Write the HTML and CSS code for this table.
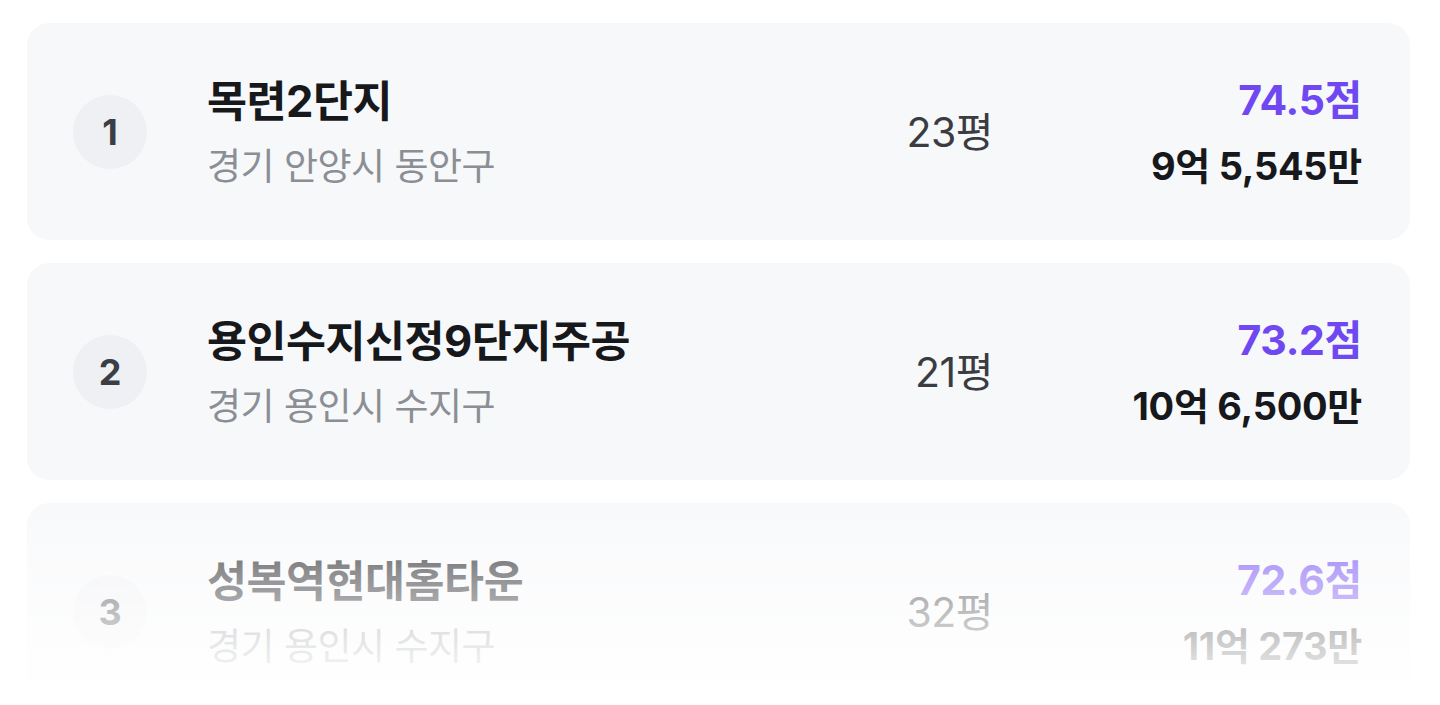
FILE: index.html
```html
<!DOCTYPE html>
<html lang="ko">
<head>
<meta charset="utf-8">
<link rel="stylesheet" href="styles.css">
</head>
<body>
<div class="list">
  <div class="card">
    <div class="rank">1</div>
    <div class="info">
      <div class="name">목련2단지</div>
      <div class="addr">경기 안양시 동안구</div>
    </div>
    <div class="area">23평</div>
    <div class="right">
      <div class="score">74.5점</div>
      <div class="price">9억 5,545만</div>
    </div>
  </div>
  <div class="card">
    <div class="rank">2</div>
    <div class="info">
      <div class="name">용인수지신정9단지주공</div>
      <div class="addr">경기 용인시 수지구</div>
    </div>
    <div class="area">21평</div>
    <div class="right">
      <div class="score">73.2점</div>
      <div class="price">10억 6,500만</div>
    </div>
  </div>
  <div class="card">
    <div class="rank">3</div>
    <div class="info">
      <div class="name">성복역현대홈타운</div>
      <div class="addr">경기 용인시 수지구</div>
    </div>
    <div class="area">32평</div>
    <div class="right">
      <div class="score">72.6점</div>
      <div class="price">11억 273만</div>
    </div>
  </div>
  <div class="fade"></div>
</div>
</body>
</html>
```

FILE: styles.css
```css
* { box-sizing: border-box; }
html, body {
  margin: 0;
  padding: 0;
  background: #ffffff;
  height: 705px;
  overflow: hidden;
}
body {
  font-family: Inter, "Noto Sans CJK KR", sans-serif;
}
.list {
  position: relative;
  height: 680px;
  overflow: hidden;
  padding: 23px 30px 0 27px;
  display: flex;
  flex-direction: column;
  gap: 23px;
}
.card {
  flex: 0 0 217px;
  background: #f7f8fa;
  border-radius: 22px;
  display: flex;
  align-items: center;
  padding: 0 48px 0 46px;
}
.rank {
  width: 74px;
  height: 74px;
  border-radius: 50%;
  background: #eff0f3;
  color: #3b3e45;
  font-weight: 700;
  font-size: 36px;
  display: flex;
  align-items: center;
  justify-content: center;
  flex: 0 0 74px;
}
.info {
  flex: 1;
  margin-left: 60px;
  display: flex;
  flex-direction: column;
  gap: 18px;
}
.name {
  font-size: 43.5px;
  font-weight: 700;
  color: #17181c;
  line-height: 52px;
  letter-spacing: -0.5px;
}
.addr {
  font-size: 37px;
  color: #8b8e94;
  line-height: 44px;
  letter-spacing: -0.5px;
}
.area {
  font-size: 41px;
  color: #3a3c41;
  line-height: 44px;
  margin-right: 49px;
  letter-spacing: -0.5px;
}
.right {
  width: 320px;
  text-align: right;
  display: flex;
  flex-direction: column;
  gap: 20px;
}
.score {
  font-size: 41px;
  font-weight: 700;
  color: #7048f2;
  line-height: 48px;
  letter-spacing: -0.3px;
}
.price {
  font-size: 38px;
  font-weight: 700;
  color: #17181c;
  line-height: 44px;
  letter-spacing: -0.3px;
}
.fade {
  position: absolute;
  left: 0;
  right: 0;
  top: 480px;
  height: 225px;
  background: linear-gradient(to bottom, rgba(255,255,255,0) 0%, rgba(255,255,255,0.5) 40%, rgba(255,255,255,0.85) 80%, #ffffff 100%);
  pointer-events: none;
}
```
